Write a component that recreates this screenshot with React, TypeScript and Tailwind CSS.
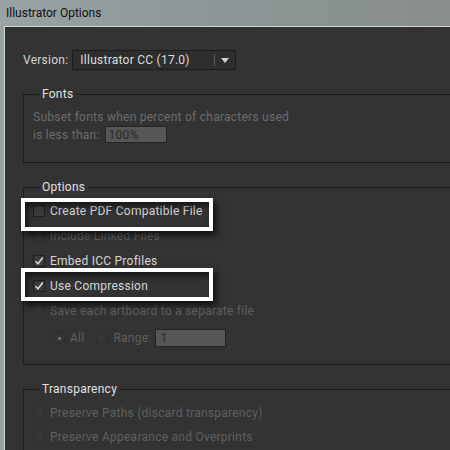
import React from "react";

const font = { fontFamily: '"Segoe UI", Roboto, "Noto Sans", sans-serif' };

function Check({ checked, disabled }: { checked?: boolean; disabled?: boolean }) {
  return (
    <span
      className={`relative inline-block h-[12px] w-[12px] shrink-0 border ${
        disabled ? "border-[#2c2c2c] bg-[#343434]" : "border-[#1f1f1f] bg-[#3b3b3b]"
      }`}
    >
      {checked && (
        <svg viewBox="0 0 12 12" className="absolute -left-[1px] -top-[1px] h-[12px] w-[12px]">
          <path d="M2.5 6.2 L5 8.8 L9.8 2.6" fill="none" stroke="#d9d9d9" strokeWidth="1.6" />
        </svg>
      )}
    </span>
  );
}

function Radio({ on, disabled }: { on?: boolean; disabled?: boolean }) {
  return (
    <span
      className={`flex h-[12px] w-[12px] shrink-0 items-center justify-center rounded-full border ${
        disabled ? "border-[#2d2d2d] bg-[#363636]" : "border-[#1f1f1f] bg-[#3b3b3b]"
      }`}
    >
      {on && <span className="h-[3px] w-[3px] rounded-full bg-[#7a7a7a]" />}
    </span>
  );
}

function CheckRow({ label, checked, disabled }: { label: string; checked?: boolean; disabled?: boolean }) {
  return (
    <div className="flex h-[25px] items-center gap-[5px]">
      <Check checked={checked} disabled={disabled} />
      <span className={disabled ? "text-[#5f5f5f]" : "text-[#d6d6d6]"}>{label}</span>
    </div>
  );
}

function Group({ title, children, className }: { title: string; children: React.ReactNode; className?: string }) {
  return (
    <fieldset className={`w-[480px] border border-[#1d1d1d] pl-[9px] ${className ?? ""}`}>
      <legend className="ml-[6px] px-[3px] text-[#e0e0e0]">{title}</legend>
      {children}
    </fieldset>
  );
}

export default function App() {
  return (
    <div
      className="h-[450px] w-[450px] overflow-hidden bg-gradient-to-r from-[#9aa3a4] via-[#8d9696] to-[#878e8c] text-[12px] leading-none tracking-[0.25px]"
      style={font}
    >
      <div className="flex h-[26px] items-center pl-[6px] text-[12px] tracking-normal text-[#111]">Illustrator Options</div>
      <div className="relative ml-[4px] h-[424px] border-l border-t border-[#d0d6d6] bg-[#333333]">
        <div className="flex items-center gap-[4px] pl-[18px] pt-[23px]">
          <span className="text-[#d6d6d6]">Version:</span>
          <div className="flex h-[20px] w-[164px] items-center border border-[#1c1c1c] bg-[#2e2e2e] pl-[7px] text-[#dcdcdc]">
            <span className="flex-1">Illustrator CC (17.0)</span>
            <span className="h-[12px] w-px bg-[#5a5a5a]" />
            <svg viewBox="0 0 8 5" className="mx-[6px] h-[5px] w-[8px]">
              <path d="M0 0 H8 L4 5 Z" fill="#d0d0d0" />
            </svg>
          </div>
        </div>

        <div className="ml-[18px] mt-[18px]">
          <Group title="Fonts" className="h-[75px]">
            <div className="pt-[11px] text-[#6c6c6c]">Subset fonts when percent of characters used</div>
            <div className="mt-[3px] flex items-center gap-[5px] text-[#6c6c6c]">
              <span>is less than:</span>
              <span className="flex h-[17px] w-[62px] items-center border border-[#242424] bg-[#565656] pl-[3px] text-[#2a2a2a]">100%</span>
            </div>
          </Group>

          <Group title="Options" className="mt-[18px] h-[184px]">
            <div className="pt-[5px]">
              <CheckRow label="Create PDF Compatible File" />
              <CheckRow label="Include Linked Files" disabled />
              <CheckRow label="Embed ICC Profiles" checked />
              <CheckRow label="Use Compression" checked />
              <CheckRow label="Save each artboard to a separate file" disabled />
              <div className="flex h-[30px] items-center pl-[20px]">
                <Radio on disabled />
                <span className="ml-[5px] text-[#5f5f5f]">All</span>
                <span className="ml-[12px]">
                  <Radio disabled />
                </span>
                <span className="ml-[5px] text-[#5f5f5f]">Range:</span>
                <span className="ml-[4px] flex h-[18px] w-[71px] items-center border border-[#242424] bg-[#565656] pl-[4px] text-[#2a2a2a]">1</span>
              </div>
            </div>
          </Group>

          <Group title="Transparency" className="mt-[18px] h-[80px]">
            <div className="pt-[6px]">
              <div className="flex h-[24px] items-center gap-[5px]">
                <Radio disabled />
                <span className="text-[#5f5f5f]">Preserve Paths (discard transparency)</span>
              </div>
              <div className="flex h-[24px] items-center gap-[5px]">
                <Radio disabled />
                <span className="text-[#5f5f5f]">Preserve Appearance and Overprints</span>
              </div>
            </div>
          </Group>
        </div>

        <div className="absolute left-[16px] top-[171px] h-[33px] w-[192px] border-[4px] border-white shadow-[3px_4px_6px_rgba(0,0,0,0.7),inset_3px_4px_6px_rgba(0,0,0,0.6)]" />
        <div className="absolute left-[16px] top-[241px] h-[33px] w-[192px] border-[4px] border-white shadow-[3px_4px_6px_rgba(0,0,0,0.7),inset_3px_4px_6px_rgba(0,0,0,0.6)]" />
      </div>
    </div>
  );
}
